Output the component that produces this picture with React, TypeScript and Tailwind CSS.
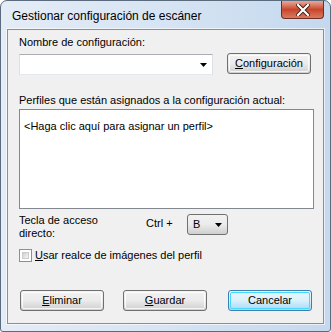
const font = { fontFamily: '"Liberation Sans", Arial, sans-serif' };

function Arrow() {
  return (
    <svg width="7" height="4" viewBox="0 0 7 4">
      <path d="M0 0H7L3.5 4Z" fill="#000" />
    </svg>
  );
}

function Btn({ children, primary }: { children: React.ReactNode; primary?: boolean }) {
  return (
    <button
      className={
        primary
          ? "w-[84px] h-[21px] rounded-[3px] border border-[#3c7fb1] p-px bg-gradient-to-b from-[#eaf6fd] via-[#d9f0fc] to-[#a7d9f5] text-[11px] text-black"
          : "w-[84px] h-[21px] rounded-[3px] border border-[#707070] p-px bg-gradient-to-b from-[#f2f2f2] via-[#ebebeb] to-[#cfcfcf] text-[11px] text-black"
      }
    >
      <div
        className={
          primary
            ? "h-full w-full rounded-[2px] border border-[#48d8fb] flex items-center justify-center leading-none"
            : "h-full w-full rounded-[2px] border border-white/80 flex items-center justify-center leading-none"
        }
      >
        {children}
      </div>
    </button>
  );
}

export default function App() {
  return (
    <div
      style={font}
      className="w-[331px] h-[332px] rounded-t-[7px] rounded-b-[3px] border border-[#5b6a7c] bg-gradient-to-r from-[#e4ecf6] via-[#d6e4f3] to-[#c4d8ee] flex flex-col text-[11px] text-black overflow-hidden"
    >
      <div className="h-[28px] flex items-start shrink-0">
        <div className="pl-[11px] pt-[6px] text-[12px] text-black flex-1">Gestionar configuración de escáner</div>
        <div className="mr-[6px] w-[43px] h-[18px] rounded-b-[4px] border border-t-0 border-[#6d2e25] bg-gradient-to-b from-[#e8a898] via-[#c7462b] to-[#d97a5f] flex items-center justify-center">
          <svg width="14" height="12" viewBox="0 0 14 12">
            <path d="M2 1L12 11M12 1L2 11" stroke="#3d1a14" strokeWidth="4" strokeLinecap="square" />
            <path d="M2 1L12 11M12 1L2 11" stroke="#fff" strokeWidth="2.2" strokeLinecap="square" />
          </svg>
        </div>
      </div>

      <div className="mx-[6px] mb-[7px] flex-1 border border-[#8390a0] bg-[#f0f0f0] flex flex-col px-[11px] pt-[5px] shadow-[0_0_0_1px_rgba(255,255,255,0.6)]">
        <div className="h-[15px] leading-[15px]">Nombre de configuración:</div>
        <div className="mt-[4px] flex items-start gap-[14px]">
          <div className="w-[194px] h-[21px] border border-[#abadb3] border-l-[#dbdfe6] border-r-[#dbdfe6] border-b-[#e3e9ef] bg-white flex items-center justify-end pr-[5px]">
            <Arrow />
          </div>
          <div className="-mt-px">
            <Btn>
              <span><span className="underline">C</span>onfiguración</span>
            </Btn>
          </div>
        </div>

        <div className="mt-[18px] h-[15px] leading-[15px]">Perfiles que están asignados a la configuración actual:</div>
        <div className="mt-[1px] w-[295px] h-[100px] border border-[#828790] bg-white px-[4px] pt-[9px]">
          <div className="leading-[15px]">&lt;Haga clic aquí para asignar un perfil&gt;</div>
        </div>

        <div className="mt-[4px] flex items-start">
          <div className="w-[127px] leading-[13px] pt-[1px]">
            Tecla de acceso
            <br />
            directo:
          </div>
          <div className="pt-[3px] w-[41px] leading-[15px]">Ctrl +</div>
          <div className="mt-[1px] w-[41px] h-[21px] rounded-[3px] border border-[#707070] bg-gradient-to-b from-[#f2f2f2] via-[#ebebeb] to-[#cfcfcf] flex items-center justify-between pl-[5px] pr-[5px]">
            <span>B</span>
            <Arrow />
          </div>
        </div>

        <div className="mt-[8px] flex items-center gap-[3px]">
          <div className="w-[13px] h-[13px] border border-[#8e8f8f] bg-white p-[2px]">
            <div className="w-full h-full bg-gradient-to-br from-[#cbcfd5] to-[#f6f6f6] border border-[#ccc]" />
          </div>
          <span className="leading-[15px]">
            <span className="underline">U</span>sar realce de imágenes del perfil
          </span>
        </div>

        <div className="mt-[27px] flex items-center pl-[1px]">
          <Btn>
            <span><span className="underline">E</span>liminar</span>
          </Btn>
          <div className="ml-[19px]">
            <Btn>
              <span><span className="underline">G</span>uardar</span>
            </Btn>
          </div>
          <div className="ml-[21px]">
            <Btn primary>Cancelar</Btn>
          </div>
        </div>
      </div>
    </div>
  );
}
